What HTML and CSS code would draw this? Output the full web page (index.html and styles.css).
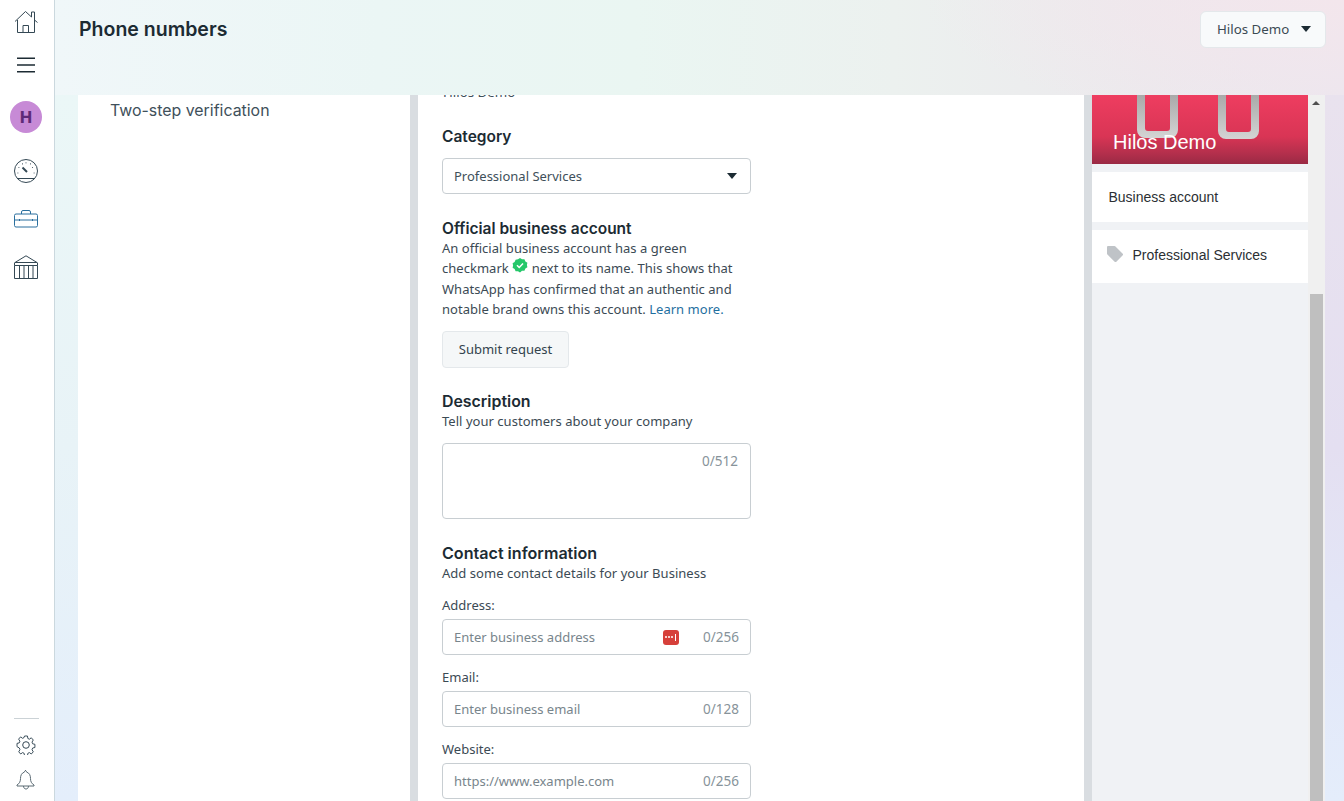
FILE: index.html
```html
<!DOCTYPE html>
<html lang="en">
<head>
<meta charset="utf-8">
<title>Phone numbers</title>
<link rel="stylesheet" href="styles.css">
</head>
<body>
<div class="app">
  <nav class="rail">
    <svg class="ico home" viewBox="0 0 24 24" width="24" height="24"><path d="M1 11.500 11.500 1.500 17.500 7V2h3v8L23.500 12.500M3.500 10v12.500h17V10M9 22.500V15.500h5.500v7"/></svg>
    <svg class="ico menu" viewBox="0 0 18 16" width="18" height="16"><path d="M0 1.200h18M0 8h18M0 14.800h18"/></svg>
    <div class="avatar">H</div>
    <svg class="ico gauge" viewBox="0 0 24 24" width="24" height="24"><circle cx="12" cy="12" r="11.500"/><path class="fine" d="M3.500 14h.8M4.500 8.500h.8M8 4.800h.8M12 3.500v.8M16 4.800h.8M19 8.500h-.8M20.500 14h-.8M3 19.500h18"/><path class="thick" d="M8.500 8.500 13 13"/></svg>
    <svg class="ico brief" viewBox="0 0 24 18" width="24" height="18"><path d="M7.500 4V2A1.500 1.500 0 0 1 9 .5h6A1.500 1.500 0 0 1 16.500 2v2M2 4h20a1.500 1.500 0 0 1 1.500 1.500v10A1.500 1.500 0 0 1 22 17H2A1.500 1.500 0 0 1 .5 15.500v-10A1.500 1.500 0 0 1 2 4ZM.5 10H23.500M5.500 9v2M18.500 9v2"/></svg>
    <svg class="ico bank" viewBox="0 0 24 24" width="24" height="24"><path d="M1 7.500 12 .8 23 7.500M1 7.500h22M.5 10.500h23v13H.5ZM.5 7.500v3M23.500 7.500v3M5.500 10.500v13M10 10.500v13M14.500 10.500v13M19 10.500v13"/></svg>
    <div class="rail-spacer"></div>
    <div class="rail-line"></div>
    <svg class="ico gear" viewBox="0 0 20 20" width="20" height="20"><path d="M8.400 1h3.200l.5 2.500 1.700.7 2.100-1.400 2.200 2.200-1.400 2.100.7 1.700 2.500.5v3.200l-2.500.5-.7 1.700 1.400 2.100-2.200 2.200-2.100-1.400-1.700.7-.5 2.500H8.400l-.5-2.500-1.700-.7-2.100 1.400-2.200-2.200 1.400-2.100-.7-1.700L0 11.600V8.400l2.500-.5.700-1.700-1.400-2.100L4 1.900l2.100 1.400 1.700-.7Z" transform="translate(1 0) scale(.9 1)"/><circle cx="10" cy="10" r="3.300"/></svg>
    <svg class="ico bell" viewBox="0 0 20 22" width="20" height="22"><path d="M10 1.500c-1 0-1.500.7-1.500 1.500C5.500 4 4.500 6.500 4.500 9.500c0 3-1 5-3.500 6.500v1h17v-1c-2.500-1.500-3.500-3.500-3.500-6.500 0-3-1-5.500-4-6.500 0-.8-.5-1.500-1.500-1.500ZM7.500 17c0 4 5 4 5 0"/></svg>
  </nav>
  <main class="main">
    <header class="topbar">
      <h1 class="page-title">Phone numbers</h1>
      <button class="account-btn">Hilos Demo<span class="caret"></span></button>
    </header>
    <div class="panels">
      <div class="left-gutter"></div>
      <aside class="side-panel">
        <div class="side-item">Two-step verification</div>
      </aside>
      <section class="form-panel">
        <div class="form">
          <div class="clipped">Hilos Demo</div>
          <h2 class="heading category">Category</h2>
          <div class="field select"><span>Professional Services</span><span class="caret"></span></div>

          <h2 class="heading official">Official business account</h2>
          <p class="copy official-copy">An official business account has a green<br>checkmark <svg class="verified" viewBox="0 0 16 16" width="16" height="16"><path class="badge" d="M8 0l2 1.300 2.400-.1 1 2.200 2 1.300-.5 2.300.5 2.300-2 1.300-1 2.200-2.400-.1L8 14.500l-2-1.300-2.400.1-1-2.200-2-1.300.5-2.300L.6 5.200l2-1.300 1-2.200L6 1.300Z"/><path class="tick" d="M5 7.300 7.200 9.500 11 5.500"/></svg> next to its name. This shows that<br>WhatsApp has confirmed that an authentic and<br>notable brand owns this account. <a class="link" href="#">Learn more.</a></p>
          <button class="submit">Submit request</button>

          <h2 class="heading desc">Description</h2>
          <p class="copy single">Tell your customers about your company</p>
          <div class="field textarea"><span class="count">0/512</span></div>

          <h2 class="heading contact">Contact information</h2>
          <p class="copy single">Add some contact details for your Business</p>
          <label class="lbl">Address:</label>
          <div class="field input"><span class="ph">Enter business address</span><span class="keyicon"><i></i><i></i><i></i><b></b></span><span class="count">0/256</span></div>
          <label class="lbl">Email:</label>
          <div class="field input"><span class="ph">Enter business email</span><span class="count">0/128</span></div>
          <label class="lbl">Website:</label>
          <div class="field input"><span class="ph">https://www.example.com</span><span class="count">0/256</span></div>
        </div>
      </section>
      <aside class="preview">
        <div class="preview-col">
          <div class="hero">
            <svg class="loops" viewBox="0 0 216 69" width="216" height="69"><defs><linearGradient id="loopfill" x1="0" y1="0" x2="0" y2="1"><stop offset="0" stop-color="#a9a9a9"/><stop offset="1" stop-color="#d4d4d4"/></linearGradient></defs><path fill="url(#loopfill)" d="M45 0V35a8 8 0 0 0 8 8H78a8 8 0 0 0 8-8V0H78V33a3 3 0 0 1-3 3H56a3 3 0 0 1-3-3V0Z"/><path fill="url(#loopfill)" d="M126 0V36a8 8 0 0 0 8 8h25a8 8 0 0 0 8-8V0H159V34a3 3 0 0 1-3 3H137a3 3 0 0 1-3-3V0Z"/></svg>
            <div class="hero-name">Hilos Demo</div>
          </div>
          <div class="card first-card">Business account</div>
          <div class="card second-card"><svg class="tag" viewBox="0 0 17 17" width="17" height="17"><path d="M1 0h6.500a1.500 1.500 0 0 1 1 .4l7 7a1.500 1.500 0 0 1 0 2.200l-5.900 5.900a1.500 1.500 0 0 1-2.200 0l-7-7a1.500 1.500 0 0 1-.4-1V1a1 1 0 0 1 1-1Z"/></svg><span>Professional Services</span></div>
        </div>
        <div class="scrollbar"><span class="arrow"></span><div class="thumb"></div></div>
      </aside>
      <div class="right-gutter"></div>
    </div>
  </main>
</div>
</body>
</html>
```
FILE: styles.css
```css
* { box-sizing: border-box; }
html, body { margin: 0; height: 100%; overflow: hidden; }
body { font-family: "Noto Sans", "Open Sans", sans-serif; font-size: 14px; color: #1c2b33; }
.app { display: flex; height: 801px; width: 1344px; }
.rail { width: 55px; flex: none; background: #fff; border-right: 1px solid #cbd8de; display: flex; flex-direction: column; align-items: center; padding: 10px 2px 0 0; }
.ico { display: block; fill: none; stroke: #344854; stroke-width: 1; flex: none; }
.menu { margin-top: 23px; stroke: #1c2b33; stroke-width: 1.600; }
.avatar { margin-top: 28px; width: 32px; height: 32px; border-radius: 50%; background: #c78ad6; color: #5e2a78; font: 800 16px/32px Inter, sans-serif; text-align: center; flex: none; }
.gauge { margin-top: 26px; }
.gauge .fine { stroke-width: 1.200; }
.gauge .thick { stroke-width: 2; }
.brief { margin-top: 27px; stroke: #2a6f9e; }
.bank { margin-top: 27px; }
.rail-spacer { flex: 1; }
.rail-line { width: 25px; height: 1px; background: #cbd2d6; flex: none; }
.gear { margin-top: 16px; }
.bell { margin-top: 14px; margin-bottom: 10px; stroke: #5a6a73; }

.main { flex: 1; display: flex; flex-direction: column; min-width: 0; }
.topbar { height: 95px; flex: none; display: flex; justify-content: space-between; align-items: flex-start; padding: 11px 18px 0 24px; background: radial-gradient(ellipse 420px 130px at 100% 0, #f3e6ec, rgba(243,230,236,0)), linear-gradient(90deg, #f0f7f9 0%, #ebf6f5 25%, #eaf6f2 45%, #ecf1ef 65%, #ece9ed 85%, #ece6ef 100%); }
.page-title { margin: 5px 0 0; font: 600 19.500px/26px Inter, sans-serif; color: #1c2b33; }
.account-btn { width: 126px; height: 37px; background: #f8fafb; border: 1px solid #e4e8eb; border-radius: 6px; display: flex; align-items: center; justify-content: space-between; padding: 0 14px 2px 16px; font: 13.300px "Noto Sans", sans-serif; color: #3b4a54; }
.caret { width: 0; height: 0; border-left: 5.500px solid transparent; border-right: 5.500px solid transparent; border-top: 6px solid #1c2b33; flex: none; }

.panels { flex: 1; min-height: 0; display: flex; }
.left-gutter { width: 23px; flex: none; background: linear-gradient(#ebf7f7 0%, #e8f3f7 50%, #e4eefb 100%); }
.side-panel { width: 332px; flex: none; background: #fff; padding: 5px 32px; font: 15.900px/22px Inter, sans-serif; color: #40505a; }
.form-panel { width: 682px; flex: none; background: #fff; border-left: 8px solid #d9dde1; border-right: 8px solid #d9dde1; overflow: hidden; padding-left: 24px; }
.form { width: 309px; margin-top: -13px; }
.clipped { height: 20px; padding-left: 1px; line-height: 20px; font-size: 13.300px; color: #40505a; }
.heading { margin: 0; font: 600 15.500px/20px Inter, sans-serif; color: #1c2b33; }
.category { margin-top: 25px; }
.field { border: 1px solid #c8ced2; border-radius: 4px; background: #fff; display: flex; align-items: center; position: relative; }
.select { height: 36px; margin-top: 11px; padding: 0 13px 0 11px; justify-content: space-between; color: #40505a; font-size: 13px; }
.official { margin-top: 25px; }
.copy { margin: 0; font-size: 13px; letter-spacing: .03px; line-height: 20.400px; color: #3b4a54; }
.official-copy { margin-top: -1px; }
.single { line-height: 20px; margin-top: -1px; }
.verified { display: inline-block; vertical-align: middle; margin: -8px 0 0; }
.badge { fill: #25c76a; }
.tick { fill: none; stroke: #fff; stroke-width: 1.500; }
.link { color: #1f6f9f; text-decoration: none; }
.submit { display: block; width: 127px; height: 37px; margin: 11px 0 0; background: #f5f7f8; border: 1px solid #e4e8eb; border-radius: 4px; font: 13px "Noto Sans", sans-serif; color: #33434d; padding: 0; }
.desc { margin-top: 24px; font-size: 15.900px; }
.textarea { height: 76px; margin-top: 12px; align-items: flex-start; justify-content: flex-end; padding: 8px 12px; }
.count { color: #87939a; font-size: 13.500px; line-height: 18px; }
.contact { margin: 24px 0 1px; font-size: 16.100px; }
.lbl { display: block; margin-top: 13px; height: 18px; font-size: 13px; line-height: 18px; color: #3b4a54; }
.input { height: 36px; margin-top: 5px; padding: 0 11px 0 11px; justify-content: space-between; }
.ph { color: #78858c; font-size: 13px; }
.keyicon { position: absolute; left: 220px; top: 10px; width: 16px; height: 15px; border-radius: 3px; background: #d6403a; display: flex; align-items: center; gap: 1px; padding-left: 2px; }
.keyicon i { width: 2px; height: 2px; background: #fff; border-radius: 50%; }
.keyicon b { width: 1px; height: 7px; background: #fff; margin-left: 1px; }

.preview { width: 233px; flex: none; display: flex; background: #f0f2f5; }
.preview-col { width: 216px; flex: none; }
.hero { height: 69px; position: relative; overflow: hidden; background: linear-gradient(#ee3d60 0%, #d93555 60%, #b32f4c 85%, #9a2a44 100%); }
.loops { position: absolute; left: 0; top: 0; display: block; }
.hero-name { position: absolute; left: 21px; bottom: 10px; font: 20px/24px "Liberation Sans", sans-serif; color: #fff; }
.card { background: #fff; font: 14px/18px "Liberation Sans", sans-serif; color: #2b2f33; display: flex; align-items: center; }
.first-card { margin-top: 8px; height: 50px; padding-left: 16.500px; }
.second-card { margin-top: 8px; height: 53px; padding: 0 0 4px 15px; gap: 8.500px; }
.tag { fill: #bfc3c7; }
.scrollbar { width: 17px; flex: none; position: relative; background: #f0f0f0; }
.arrow { position: absolute; left: 4px; top: 6px; border-left: 4px solid transparent; border-right: 4px solid transparent; border-bottom: 4px solid #505050; }
.thumb { position: absolute; left: 2px; right: 2px; top: 199px; bottom: 0; background: #bfbfbf; }
.right-gutter { flex: 1; background: linear-gradient(#e9e2ee 0%, #e4dff1 50%, #e3e6f7 72%, #e4edfb 100%); }
```
